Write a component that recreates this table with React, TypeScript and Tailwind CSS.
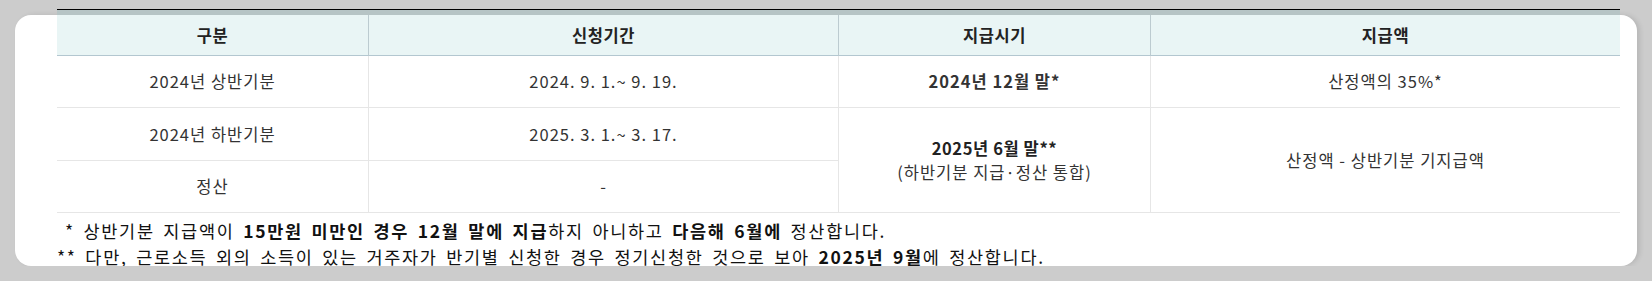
const font = '[font-family:"Noto_Sans_CJK_KR","Noto_Sans",sans-serif]';

const headers = ['구분', '신청기간', '지급시기', '지급액'];

const cell = 'flex items-center justify-center border-b border-[#e6e6e6] text-[16.5px] tracking-[1px] text-[#333]';

export default function App() {
  return (
    <div className={`w-[1652px] h-[281px] bg-[#cccccc] pt-[15px] pl-[15px] ${font}`}>
      <div className="flow-root w-[1622px] h-[251px] bg-white rounded-[16px] shadow-[3px_0_5px_rgba(0,0,0,0.1)] [clip-path:inset(-20px_-20px_0_-20px)]">
        <div className="ml-[42px] w-[1563px] -mt-[6px]">
          <div className="border-t border-black h-[6px] bg-[#b6c4c5]" />
          <div className="grid grid-cols-[312px_470px_312px_469px] grid-rows-[41px_52px_53px_52px]">
            {headers.map((h, i) => (
              <div
                key={h}
                className={`flex items-center justify-center bg-[#e9f5f5] border-b border-[#b3c7d0] text-[16.5px] tracking-[0.6px] font-bold text-[#222] ${
                  i < 3 ? 'border-r border-r-[#bccbd0]' : ''
                }`}
              >
                {h}
              </div>
            ))}

            {/* 상반기 */}
            <div className={`${cell} border-r`}>2024년 상반기분</div>
            <div className={`${cell} border-r tracking-[0.6px]`}>2024. 9. 1.~ 9. 19.</div>
            <div className={`${cell} border-r font-bold text-[#222] tracking-[0.6px]`}>2024년 12월 말*</div>
            <div className={cell}>산정액의 35%*</div>

            {/* 하반기 */}
            <div className={`${cell} border-r`}>2024년 하반기분</div>
            <div className={`${cell} border-r tracking-[0.6px]`}>2025. 3. 1.~ 3. 17.</div>
            <div className={`${cell} row-span-2 flex-col border-r leading-[24px]`}>
              <span className="font-bold text-[#222] tracking-[0.6px]">2025년 6월 말**</span>
              <span>(하반기분 지급·정산 통합)</span>
            </div>
            <div className={`${cell} row-span-2`}>산정액 - 상반기분 기지급액</div>

            {/* 정산 */}
            <div className={`${cell} border-r`}>정산</div>
            <div className={`${cell} border-r`}>-</div>
          </div>

          <div className="pt-[5px] text-[17.5px] leading-[26px] tracking-[1.7px] [word-spacing:3px] text-[#111]">
            <p className="pl-[8px]">
              * 상반기분 지급액이 <b>15만원 미만인 경우 12월 말에 지급</b>하지 아니하고 <b>다음해 6월에</b> 정산합니다.
            </p>
            <p>
              ** 다만, 근로소득 외의 소득이 있는 거주자가 반기별 신청한 경우 정기신청한 것으로 보아 <b>2025년 9월</b>에 정산합니다.
            </p>
          </div>
        </div>
      </div>
    </div>
  );
}
